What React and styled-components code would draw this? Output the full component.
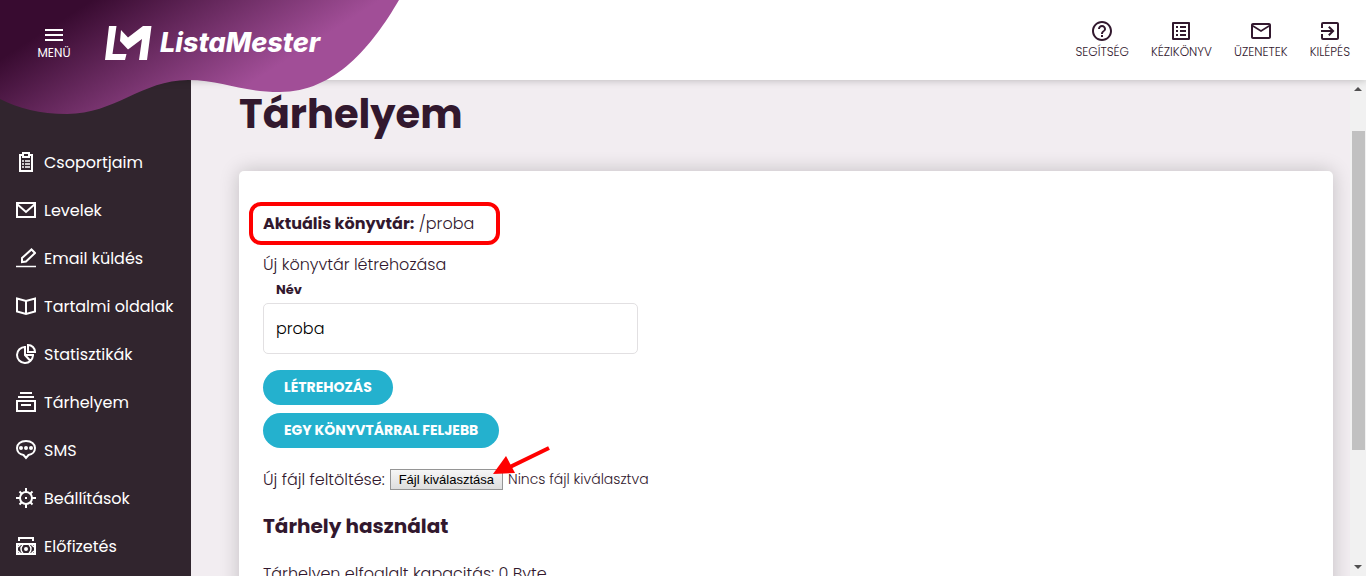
import React, { useRef } from 'react';
import styled, { createGlobalStyle } from 'styled-components';
import { MdHelpOutline, MdListAlt, MdMailOutline, MdExitToApp } from 'react-icons/md';

const GlobalStyle = createGlobalStyle`
  * {
    box-sizing: border-box;
  }

  body {
    margin: 0;
    background-color: #f2edf1;
    color: #32182e;
    font-family: Poppins, Inter, sans-serif;
    font-size: 16px;
    font-weight: 300;
  }
`;

const Page = styled.div`
  display: flex;
  flex-direction: column;
  height: 100vh;
  overflow: hidden;
`;

const Header = styled.header`
  position: relative;
  z-index: 2;
  flex: none;
  display: flex;
  align-items: center;
  height: 80px;
  padding: 0 16px 0 32px;
  background-color: #fff;
  box-shadow: 0 0 8px rgba(0, 0, 0, 0.25);
`;

const Wave = styled.svg`
  position: absolute;
  top: 0;
  left: 0;
  width: 400px;
  height: 115px;
`;

const MenuButton = styled.button`
  position: relative;
  display: flex;
  flex-direction: column;
  align-items: center;
  gap: 4px;
  width: 44px;
  margin-top: 10px;
  padding: 0;
  border: 0;
  background: none;
  color: #fff;
  font: 400 12px/16px Poppins, Inter, sans-serif;
  cursor: pointer;
`;

const Logo = styled.a`
  position: relative;
  display: flex;
  align-items: center;
  gap: 8px;
  margin: 6px auto 0 28px;
  color: #fff;
  font-family: Inter, sans-serif;
  font-size: 27px;
  font-style: italic;
  font-weight: 800;
  line-height: 36px;
  text-decoration: none;
`;

const TopNav = styled.nav`
  display: flex;
  gap: 22px;
`;

const TopLink = styled.a`
  display: flex;
  flex-direction: column;
  align-items: center;
  color: #32182e;
  font-size: 12px;
  line-height: 18px;
  text-decoration: none;
  text-transform: uppercase;
`;

const Body = styled.div`
  flex: 1;
  display: flex;
  min-height: 0;
`;

const Sidebar = styled.nav`
  flex: none;
  width: 191px;
  padding-top: 58px;
  background-color: #31252e;
`;

const SideLink = styled.a`
  display: flex;
  align-items: center;
  gap: 8px;
  height: 48px;
  padding-left: 16px;
  color: #fff;
  font-weight: 400;
  white-space: nowrap;
  text-decoration: none;

  svg {
    flex: none;
    width: 20px;
    height: 20px;
    fill: none;
    stroke: #fff;
    stroke-width: 2;
  }
`;

const Content = styled.main`
  flex: 1;
  min-width: 0;
  overflow: hidden;
  padding: 4px 17px 0 48px;
`;

const Title = styled.h1`
  margin: 0;
  font-size: 40px;
  font-weight: 700;
  line-height: 60px;
`;

const Card = styled.section`
  margin-top: 27px;
  padding: 32px 24px 48px;
  border-radius: 5px;
  background-color: #fff;
  box-shadow: 0 0 20px rgba(0, 0, 0, 0.2);
`;

const CurrentFolder = styled.p`
  position: relative;
  width: max-content;
  margin: 0;
  line-height: 42px;

  b {
    font-weight: 700;
  }

  &::after {
    content: '';
    position: absolute;
    inset: -1px -26px 0 -14px;
    border: 4px solid #f00;
    border-radius: 12px;
  }
`;

const Text = styled.p`
  margin: 0;
  line-height: 24px;
`;

const FolderForm = styled.form`
  display: flex;
  flex-direction: column;
  align-items: flex-start;
  margin-top: 8px;
`;

const FieldLabel = styled.label`
  margin-left: 13px;
  font-size: 13px;
  font-weight: 700;
  line-height: 26px;
`;

const TextInput = styled.input`
  width: 375px;
  max-width: 100%;
  height: 51px;
  margin-bottom: 16px;
  padding: 0 12px;
  border: 1px solid #e2e0e2;
  border-radius: 5px;
  background-color: #fff;
  color: #000;
  font: 300 16px Poppins, Inter, sans-serif;
`;

const PillButton = styled.button`
  height: 35px;
  margin-bottom: 8px;
  padding: 0 21px;
  border: 0;
  border-radius: 18px;
  background-color: #24b1ce;
  color: #fff;
  font: 700 14px Poppins, Inter, sans-serif;
  text-transform: uppercase;
  cursor: pointer;
`;

const UploadRow = styled.div`
  position: relative;
  display: flex;
  align-items: center;
  gap: 5px;
  width: max-content;
  height: 24px;
  margin-top: 11px;
`;

const HiddenFile = styled.input`
  display: none;
`;

const FileButton = styled.button`
  height: 21px;
  padding: 0 8px;
  border: 1px solid #959595;
  border-radius: 0;
  background: linear-gradient(#f6f6f6, #dedede);
  color: #000;
  font: 13px "Liberation Sans", Arial, sans-serif;
`;

const FileName = styled.span`
  font-size: 14px;
`;

const Arrow = styled.svg`
  position: absolute;
  top: -22px;
  left: 229px;
  width: 60px;
  height: 34px;
`;

const SubTitle = styled.h2`
  margin: 20px 0 21px;
  font-size: 20px;
  font-weight: 700;
  line-height: 30px;
`;

const ScrollBar = styled.div`
  flex: none;
  display: flex;
  flex-direction: column;
  align-items: center;
  width: 16px;
  padding: 6px 0;
  background-color: #f1f1f1;
`;

const ScrollThumb = styled.div`
  flex: 0 0 66%;
  width: 13px;
  margin: 39px 0 auto;
  background-color: #c1c1c1;
`;

const topLinks = [
  { label: 'Segítség', icon: MdHelpOutline },
  { label: 'Kézikönyv', icon: MdListAlt },
  { label: 'Üzenetek', icon: MdMailOutline },
  { label: 'Kilépés', icon: MdExitToApp },
];

const sideLinks = [
  {
    label: 'Csoportjaim',
    icon: (
      <>
        <path d="M7 3H4v16h12V3h-3M7 1h6v4H7z" />
        <path d="M6 9h2m1 0h5M6 12h2m1 0h5M6 15h2m1 0h5" strokeWidth="1.5" />
      </>
    ),
  },
  { label: 'Levelek', icon: <path d="M1 3h18v14H1zM1 4l9 8 9-8" /> },
  {
    label: 'Email küldés',
    icon: (
      <>
        <path d="M6 14v-4l9.500-8.500 3.500 3.500L10 13.500z" />
        <path d="M0 18.500h20" strokeWidth="1.500" />
      </>
    ),
  },
  { label: 'Tartalmi oldalak', icon: <path d="M1 2.500 10 5l9-2.500V15.500L10 18 1 15.500zM10 5v13" /> },
  {
    label: 'Statisztikák',
    icon: <path d="M9 3a8 8 0 1 0 8 8.500M9 2v9l5 5.500M9 11h9M12 1v7h7a7 7 0 0 0-7-7z" />,
  },
  { label: 'Tárhelyem', icon: <path d="M4 1h12M2 5h16M1 9h18v10H1zM5 13h10" /> },
  {
    label: 'SMS',
    icon: (
      <>
        <path d="M7.500 15C3.500 14.500 1 11.500 1 8c0-4 3.500-7 9-7s9 3 9 7c0 3.500-2.500 6.500-6.500 7L10 18z" />
        <circle cx="5" cy="8" r="1" />
        <circle cx="10" cy="8" r="1" />
        <circle cx="15" cy="8" r="1" />
      </>
    ),
  },
  {
    label: 'Beállítások',
    icon: (
      <>
        <circle cx="10" cy="10" r="6" />
        <path d="M10 0v4M10 16v4M0 10h4M16 10h4M3.500 3.500l2 2M14.500 14.500l2 2M16.500 3.500l-2 2M5.500 14.500l-2 2M9 10h2" />
      </>
    ),
  },
  {
    label: 'Előfizetés',
    icon: (
      <>
        <path d="M3 5V2h14v3M1 8h18v10H1z" />
        <circle cx="10" cy="13" r="1" />
        <path
          d="M2 11l3-3M15 8l3 3M2 15l3 3M15 18l3-3M7 9a5 5 0 0 0 0 8M13 9a5 5 0 0 1 0 8"
          strokeWidth="1.500"
        />
      </>
    ),
  },
];

const App = () => {
  const fileRef = useRef(null);

  return (
    <Page>
      <GlobalStyle />
      <Header>
        <Wave viewBox="0 0 400 115" aria-hidden="true">
          <defs>
            <linearGradient id="wave" gradientUnits="userSpaceOnUse" x1="27" y1="42" x2="111" y2="173">
              <stop offset="0" stopColor="#380b30" />
              <stop offset="1" stopColor="#a14e97" />
            </linearGradient>
          </defs>
          <path
            fill="url(#wave)"
            d="M0 0H399C372 46 335 92 280 92C240 92 222 80 188 80C142 80 115 114 67 114C40 114 18 108 0 99Z"
          />
        </Wave>
        <MenuButton type="button">
          <svg width="18" height="12" fill="#fff" aria-hidden="true">
            <path d="M0 0h18v2H0zM0 5h18v2H0zM0 10h18v2H0z" />
          </svg>
          MENÜ
        </MenuButton>
        <Logo href="#">
          <svg width="48" height="36" viewBox="0 0 48 36" fill="#fff" aria-hidden="true">
            <path d="M5 1h7.500L8.500 29h14L21 35H1z" />
            <path d="M17 5l7 7.500L39 1h8.500L43 35h-8l3-21-14 10.500L16 16z" />
          </svg>
          ListaMester
        </Logo>
        <TopNav>
          {topLinks.map(({ label, icon: Icon }) => (
            <TopLink href="#" key={label}>
              <Icon size={24} />
              {label}
            </TopLink>
          ))}
        </TopNav>
      </Header>

      <Body>
        <Sidebar>
          {sideLinks.map(({ label, icon }) => (
            <SideLink href="#" key={label}>
              <svg viewBox="0 0 20 20" aria-hidden="true">{icon}</svg>
              {label}
            </SideLink>
          ))}
        </Sidebar>

        <Content>
          <Title>Tárhelyem</Title>
          <Card>
            <CurrentFolder>
              <b>Aktuális könyvtár:</b> /proba
            </CurrentFolder>
            <FolderForm onSubmit={(e) => e.preventDefault()}>
              <Text>Új könyvtár létrehozása</Text>
              <FieldLabel htmlFor="name">Név</FieldLabel>
              <TextInput id="name" type="text" defaultValue="proba" />
              <PillButton type="submit">Létrehozás</PillButton>
              <PillButton type="button">Egy könyvtárral feljebb</PillButton>
            </FolderForm>
            <UploadRow>
              <label htmlFor="file">Új fájl feltöltése:</label>
              <HiddenFile id="file" type="file" ref={fileRef} />
              <FileButton type="button" onClick={() => fileRef.current.click()}>
                Fájl kiválasztása
              </FileButton>
              <FileName>Nincs fájl kiválasztva</FileName>
              <Arrow viewBox="0 0 60 34" aria-hidden="true">
                <path d="M57 3 16 23" stroke="#f00" strokeWidth="4" />
                <path d="M1 29 14 11l9 17z" fill="#f00" />
              </Arrow>
            </UploadRow>
            <SubTitle>Tárhely használat</SubTitle>
            <Text>Tárhelyen elfoglalt kapacitás: 0 Byte</Text>
          </Card>
        </Content>

        <ScrollBar aria-hidden="true">
          <svg width="8" height="6" fill="#505050">
            <path d="M0 5 4 1l4 4z" />
          </svg>
          <ScrollThumb />
          <svg width="8" height="6" fill="#505050">
            <path d="M0 1 4 5l4-4z" />
          </svg>
        </ScrollBar>
      </Body>
    </Page>
  );
};

export default App;
